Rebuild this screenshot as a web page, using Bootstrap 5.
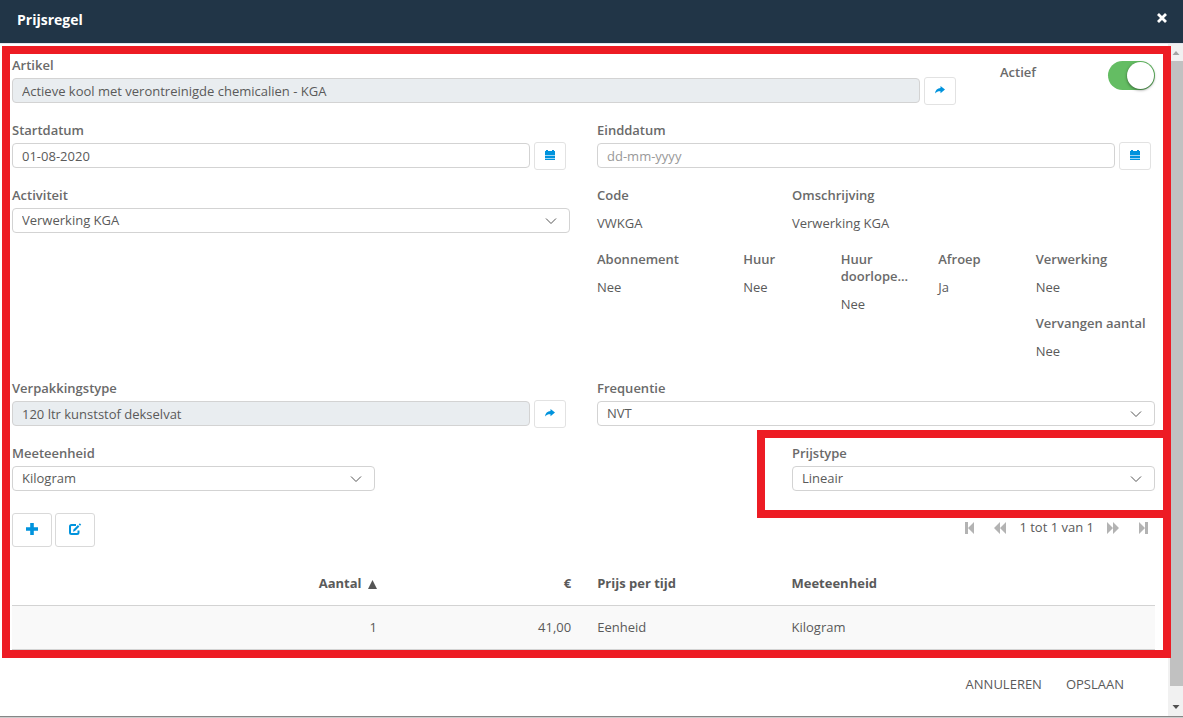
<!DOCTYPE html>
<html lang="nl">
<head>
<meta charset="utf-8">
<meta name="viewport" content="width=device-width, initial-scale=1">
<title>Prijsregel</title>
<link href="https://cdn.jsdelivr.net/npm/bootstrap@5.3.0/dist/css/bootstrap.min.css" rel="stylesheet">
<style>
  :root { --gut: 27px; --line: #d3d3d3; --accent: #0093dd; --mark: #ed1c24; }
  body { font-family: "Open Sans", sans-serif; font-size: 13px; line-height: 17px; color: #5a5a5a; background: #fff; }
  .dialog-head { background: #213547; height: 43px; padding: 0 15px 4px 17px; }
  .dialog-head h1 { font-size: 14px; line-height: 20px; font-weight: 700; color: #fff; }
  .head-close { color: #fff; padding: 0 0 4px; line-height: 0; border: 0; }
  .dialog { min-height: calc(100vh - 1px); border-bottom: 1px solid #868686; box-shadow: 0 1px 0 #ccc; margin-bottom: 1px; }
  .dialog-body { border-top: 1px solid #e6e6ee; }

  /* Highlighted area */
  .frame { border: 8px solid var(--mark); margin: 2px -3px 0 2px; padding: 3px 8px 0 2px; z-index: 1; }
  .frame-note { position: absolute; left: -35px; right: 11px; top: -15px; height: 88px; border: 8px solid var(--mark); pointer-events: none; }

  /* Form grid: gutter on the right of every cell */
  .row.fields { --bs-gutter-x: 0; margin-right: calc(var(--gut) * -1); }
  .row.fields > * { padding-right: var(--gut); }
  .row.detail-row { padding-bottom: 1px; }
  .field-label { display: block; font-weight: 600; color: #6a6a6a; margin-bottom: 4px; }
  .control-line { height: 25px; margin-bottom: 19px; }
  .control-line.with-btn { padding-right: 4px; }
  .form-control, .form-select { font-size: 13px; line-height: 17px; height: 25px; min-height: 0; padding: 0 9px; border: 1px solid var(--line); border-radius: 4px; color: #5a5a5a; }
  .form-control[readonly] { background: #e9edf0; }
  .form-control::placeholder { color: #999; }
  .form-select { background-image: url("data:image/svg+xml,%3Csvg xmlns='http://www.w3.org/2000/svg' viewBox='0 0 12 8'%3E%3Cpath d='M1 1.500l5 5 5-5' fill='none' stroke='%23555' stroke-width='1'/%3E%3C/svg%3E"); background-size: 12px 8px; background-position: right 12px center; }
  .read-field { height: 64px; }
  .read-field dt { font-weight: 600; color: #6a6a6a; margin-bottom: 11px; }
  .read-field dd { margin: 0; }

  .icon-btn { display: flex; align-items: center; justify-content: center; flex: none; width: 32px; height: 28px; padding: 0 1px 2px 0; background: #fff; border: 1px solid #e2e2e2; border-radius: 3px; color: var(--accent); }
  .icon-btn.tool { width: 40px; height: 34px; border-color: #d9d9d9; }
  .tool-group { gap: 3px; }

  .active-field { padding-top: 4px; padding-left: 13px; }
  .active-field label { padding-top: 3px; font-weight: 600; color: #6a6a6a; }
  .toggle { appearance: none; width: 47px; height: 29px; border-radius: 15px; background: #64bd63; margin: 0; display: flex; justify-content: flex-end; }
  .toggle:not(:checked) { background: #ddd; justify-content: flex-start; }
  .toggle::before { content: ""; width: 27px; height: 27px; margin: 1px; border-radius: 50%; background: #fff; box-shadow: 0 1px 3px rgba(0,0,0,.5); }

  .toolbar { margin: 3px 0 15px; }
  .pager { margin: 6px 7px 0 0; gap: 13px; }
  .pager .btn-pair { display: flex; gap: 20px; }
  .pager button { border: 0; background: none; padding: 0; color: #b3b3b3; line-height: 0; }

  .price-table { table-layout: fixed; font-size: 13px; margin: 0; }
  .price-table > :not(caption) > * > * { padding: 13px 26px 13px 0; border-bottom: 1px solid var(--line); color: #5a5a5a; line-height: 17px; box-shadow: none; background: transparent; }
  .price-table th { font-weight: 700; }
  .price-table tbody tr { background: #f9f9f9; }
  .price-table .wide { width: 34.2%; }
  .price-table .slim { width: 17%; }
  .sort-mark { margin-left: 3px; vertical-align: -1px; }

  .dialog-foot { padding: 18px 44px 20px; gap: 24px; }
  .dialog-foot .btn { font-size: 13px; line-height: 17px; padding: 0; border: 0; color: #5a5a5a; }

  .bar { width: 15px; flex: none; background: #f1f1f1; padding-left: 2px; }
  .bar svg { display: block; height: 17px; width: 13px; flex: none; }
  .bar-thumb { background: #c1c1c1; margin-bottom: 13px; }
</style>
</head>
<body>
<div class="dialog d-flex flex-column">
  <header class="dialog-head d-flex align-items-center justify-content-between">
    <h1 class="m-0">Prijsregel</h1>
    <button type="button" class="btn head-close" aria-label="Sluiten">
      <svg width="12" height="12" viewBox="0 0 12 12"><path d="M2 2l8 8M10 2l-8 8" stroke="#fff" stroke-width="2.800"/></svg>
    </button>
  </header>

  <div class="dialog-body d-flex flex-grow-1">
    <div class="flex-grow-1 d-flex flex-column">
      <main class="frame position-relative">
        <form id="prijs">
          <div class="row fields">
            <div class="col-10">
              <label class="field-label" for="artikel">Artikel</label>
              <div class="control-line with-btn d-flex align-items-center gap-1">
                <input id="artikel" class="form-control" value="Actieve kool met verontreinigde chemicalien - KGA" readonly>
                <button type="button" class="icon-btn" aria-label="Open artikel">
                  <svg width="10" height="8" viewBox="0 0 10 8" fill="currentColor"><path d="M5.500 0L10 3.600l-4.500 3.600V5.200C3.500 5.100 1.500 5.500 0 7.500 .3 4 2.500 2.100 5.500 2z"/></svg>
                </button>
              </div>
            </div>
            <div class="col-2 active-field d-flex justify-content-between align-items-start">
              <label for="actief">Actief</label>
              <input type="checkbox" role="switch" id="actief" class="toggle" checked>
            </div>
          </div>

          <div class="row fields">
            <div class="col-6">
              <label class="field-label" for="start">Startdatum</label>
              <div class="control-line with-btn d-flex align-items-center gap-1">
                <input id="start" class="form-control" value="01-08-2020">
                <button type="button" class="icon-btn" aria-label="Kies startdatum">
                  <svg width="10" height="10" viewBox="0 0 10 10"><path d="M0 1h1V0h2v1h4V0h2v1h1v9H0z" fill="#0093dd"/><path d="M0 5.500h10M0 8.500h10" stroke="#9fd5f3" stroke-width="1"/></svg>
                </button>
              </div>
            </div>
            <div class="col-6">
              <label class="field-label" for="eind">Einddatum</label>
              <div class="control-line with-btn d-flex align-items-center gap-1">
                <input id="eind" class="form-control" placeholder="dd-mm-yyyy">
                <button type="button" class="icon-btn" aria-label="Kies einddatum">
                  <svg width="10" height="10" viewBox="0 0 10 10"><path d="M0 1h1V0h2v1h4V0h2v1h1v9H0z" fill="#0093dd"/><path d="M0 5.500h10M0 8.500h10" stroke="#9fd5f3" stroke-width="1"/></svg>
                </button>
              </div>
            </div>
          </div>

          <div class="row fields detail-row">
            <div class="col-6">
              <label class="field-label" for="activiteit">Activiteit</label>
              <div class="control-line">
                <select id="activiteit" class="form-select"><option>Verwerking KGA</option></select>
              </div>
            </div>
            <div class="col-6">
              <div class="row fields">
                <dl class="read-field col-4 m-0"><dt>Code</dt><dd>VWKGA</dd></dl>
                <dl class="read-field col-8 m-0"><dt>Omschrijving</dt><dd>Verwerking KGA</dd></dl>
              </div>
              <div class="row fields">
                <dl class="read-field col-3 m-0"><dt>Abonnement</dt><dd>Nee</dd></dl>
                <dl class="read-field col-2 m-0"><dt>Huur</dt><dd>Nee</dd></dl>
                <dl class="read-field col-2 m-0"><dt>Huur doorlope...</dt><dd>Nee</dd></dl>
                <dl class="read-field col-2 m-0"><dt>Afroep</dt><dd>Ja</dd></dl>
                <div class="col-3">
                  <dl class="read-field m-0"><dt>Verwerking</dt><dd>Nee</dd></dl>
                  <dl class="read-field m-0"><dt class="text-nowrap">Vervangen aantal</dt><dd>Nee</dd></dl>
                </div>
              </div>
            </div>
          </div>

          <div class="row fields">
            <div class="col-6">
              <label class="field-label" for="verpakking">Verpakkingstype</label>
              <div class="control-line with-btn d-flex align-items-center gap-1">
                <input id="verpakking" class="form-control" value="120 ltr kunststof dekselvat" readonly>
                <button type="button" class="icon-btn" aria-label="Open verpakkingstype">
                  <svg width="10" height="8" viewBox="0 0 10 8" fill="currentColor"><path d="M5.500 0L10 3.600l-4.500 3.600V5.200C3.500 5.100 1.500 5.500 0 7.500 .3 4 2.500 2.100 5.500 2z"/></svg>
                </button>
              </div>
            </div>
            <div class="col-6">
              <label class="field-label" for="frequentie">Frequentie</label>
              <div class="control-line">
                <select id="frequentie" class="form-select"><option>NVT</option></select>
              </div>
            </div>
          </div>

          <div class="row fields justify-content-between">
            <div class="col-4">
              <label class="field-label" for="eenheid">Meeteenheid</label>
              <div class="control-line">
                <select id="eenheid" class="form-select"><option>Kilogram</option></select>
              </div>
            </div>
            <div class="col-4 position-relative">
              <div class="frame-note"></div>
              <label class="field-label" for="prijstype">Prijstype</label>
              <div class="control-line">
                <select id="prijstype" class="form-select"><option>Lineair</option></select>
              </div>
            </div>
          </div>
        </form>

        <div class="toolbar d-flex justify-content-between align-items-start">
          <div class="tool-group d-flex">
            <button type="button" class="icon-btn tool" aria-label="Toevoegen">
              <svg width="12" height="12" viewBox="0 0 12 12"><path d="M6 0v12M0 6h12" stroke="currentColor" stroke-width="3.600"/></svg>
            </button>
            <button type="button" class="icon-btn tool" aria-label="Bewerken">
              <svg width="14" height="13" viewBox="0 0 14 13" fill="none" stroke="currentColor"><path d="M8 2H3.500Q2 2 2 3.500v6Q2 11 3.500 11h5.500q1.500 0 1.500-1.500V7.500" stroke-width="2"/><path d="M5 8.800l.5-2.300L9.900 2.100l1.500 1.500L7 8z" fill="currentColor" stroke="none"/><path d="M11.300 .9l1.300 1.300" stroke-width="1.600"/></svg>
            </button>
          </div>
          <nav class="pager d-flex align-items-center" aria-label="Paginering">
            <span class="btn-pair">
              <button type="button" aria-label="Eerste"><svg width="9" height="12" viewBox="0 0 9 12" fill="currentColor"><path d="M0 0h3v12H0zM9 0v12L3 6z"/></svg></button>
              <button type="button" aria-label="Vorige"><svg width="12" height="12" viewBox="0 0 12 12" fill="currentColor"><path d="M6 0v12L0 6zM12 0v12L6 6z"/></svg></button>
            </span>
            <span>1 tot 1 van 1</span>
            <span class="btn-pair">
              <button type="button" aria-label="Volgende"><svg width="12" height="12" viewBox="0 0 12 12" fill="currentColor"><path d="M0 0l6 6-6 6zM6 0l6 6-6 6z"/></svg></button>
              <button type="button" aria-label="Laatste"><svg width="9" height="12" viewBox="0 0 9 12" fill="currentColor"><path d="M0 0l6 6-6 6zM6 0h3v12H6z"/></svg></button>
            </span>
          </nav>
        </div>

        <table class="table price-table">
          <thead>
            <tr>
              <th class="wide text-end">Aantal <svg class="sort-mark" width="9" height="9" viewBox="0 0 9 9" role="img" aria-label="oplopend"><path d="M0 9h9L4.500 0z" fill="#555"/></svg></th>
              <th class="slim text-end">€</th>
              <th class="slim">Prijs per tijd</th>
              <th>Meeteenheid</th>
            </tr>
          </thead>
          <tbody>
            <tr>
              <td class="text-end">1</td>
              <td class="text-end">41,00</td>
              <td>Eenheid</td>
              <td>Kilogram</td>
            </tr>
          </tbody>
        </table>
      </main>

      <footer class="dialog-foot d-flex justify-content-end">
        <button type="button" class="btn">ANNULEREN</button>
        <button type="button" class="btn">OPSLAAN</button>
      </footer>
    </div>

    <div class="bar d-flex flex-column" aria-hidden="true">
      <svg viewBox="0 0 13 17"><path d="M2.500 11h7L6 7z" fill="#a3a3a3"/></svg>
      <div class="bar-thumb flex-grow-1"></div>
      <svg viewBox="0 0 13 17"><path d="M2.500 6h7L6 10z" fill="#505050"/></svg>
    </div>
  </div>
</div>
<script src="https://cdn.jsdelivr.net/npm/bootstrap@5.3.0/dist/js/bootstrap.bundle.min.js"></script>
</body>
</html>
